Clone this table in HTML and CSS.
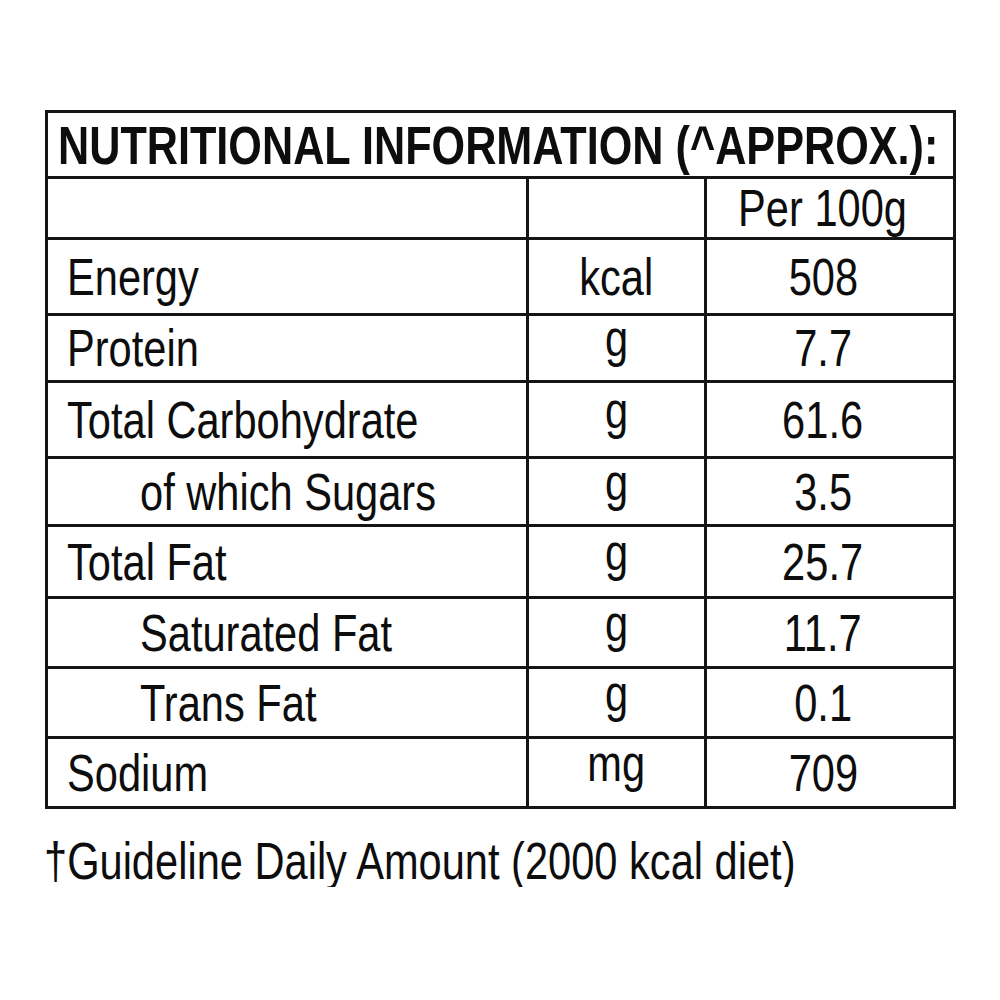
FILE: index.html
```html
<!DOCTYPE html>
<html>
<head>
<meta charset="utf-8">
<link rel="stylesheet" href="styles.css">
</head>
<body>
<table class="nutri">
  <colgroup>
    <col class="c-name">
    <col class="c-unit">
    <col class="c-val">
  </colgroup>
  <tr class="r-title"><td colspan="3" class="title"><span class="sq">NUTRITIONAL INFORMATION (^APPROX.):</span></td></tr>
  <tr class="r-head"><td></td><td></td><td class="val"><span class="sq">Per 100g</span></td></tr>
  <tr><td class="name"><span class="sq">Energy</span></td><td class="unit"><span class="sq">kcal</span></td><td class="val"><span class="sq">508</span></td></tr>
  <tr><td class="name"><span class="sq">Protein</span></td><td class="unit up"><span class="sq">g</span></td><td class="val"><span class="sq">7.7</span></td></tr>
  <tr><td class="name"><span class="sq">Total Carbohydrate</span></td><td class="unit up"><span class="sq">g</span></td><td class="val"><span class="sq">61.6</span></td></tr>
  <tr><td class="name sub"><span class="sq">of which Sugars</span></td><td class="unit up"><span class="sq">g</span></td><td class="val"><span class="sq">3.5</span></td></tr>
  <tr><td class="name"><span class="sq">Total Fat</span></td><td class="unit up"><span class="sq">g</span></td><td class="val"><span class="sq">25.7</span></td></tr>
  <tr><td class="name sub"><span class="sq">Saturated Fat</span></td><td class="unit up"><span class="sq">g</span></td><td class="val"><span class="sq">11.7</span></td></tr>
  <tr><td class="name sub"><span class="sq">Trans Fat</span></td><td class="unit up"><span class="sq">g</span></td><td class="val"><span class="sq">0.1</span></td></tr>
  <tr><td class="name"><span class="sq">Sodium</span></td><td class="unit up"><span class="sq">mg</span></td><td class="val"><span class="sq">709</span></td></tr>
</table>
<p class="foot"><span class="sq">†Guideline Daily Amount (2000 kcal diet)</span></p>
</body>
</html>
```

FILE: styles.css
```css
html, body {
  margin: 0;
  padding: 0;
  background: #fff;
}
body {
  font-family: "Liberation Sans", Arial, sans-serif;
  color: #0d0d0d;
}
.nutri {
  border-collapse: collapse;
  table-layout: fixed;
  width: 908px;
  margin: 110px 0 0 45px;
  border: 3px solid #151515;
}
.c-name { width: 481px; }
.c-unit { width: 178px; }
.c-val { width: 249px; }
.nutri td {
  border: 3px solid #151515;
  padding: 0;
  font-size: 52px;
  line-height: 1;
  vertical-align: middle;
  white-space: nowrap;
}
.sq {
  display: inline-block;
  line-height: 1;
  transform: scaleX(0.8);
}
.r-title { height: 66px; }
.r-head { height: 61px; }
.nutri tr:nth-child(3) { height: 76px; }
.nutri tr:nth-child(4) { height: 67px; }
.nutri tr:nth-child(5) { height: 76px; }
.nutri tr:nth-child(6) { height: 68px; }
.nutri tr:nth-child(7) { height: 72px; }
.nutri tr:nth-child(8) { height: 70px; }
.nutri tr:nth-child(9) { height: 70px; }
.nutri tr:nth-child(10) { height: 70px; }
.nutri td.title {
  font-size: 54px;
  font-weight: bold;
  padding-left: 10px;
  text-align: left;
  overflow: hidden;
}
.title .sq {
  transform-origin: left center;
  width: 1110px;
  margin-right: -230px;
}
.name {
  text-align: left;
  padding-left: 19px !important;
}
.name .sq { transform-origin: left center; }
.name.sub { padding-left: 92px !important; }
.unit { text-align: center; }
.unit .sq, .val .sq { transform-origin: center center; }
.unit.up .sq { transform: translateY(-10px) scaleX(0.8); }
.val {
  text-align: center;
  padding-right: 14px !important;
}
.foot {
  margin: 26px 0 0 44px;
  font-size: 52px;
  line-height: 1;
  white-space: nowrap;
}
.foot .sq { transform-origin: left center; }
```
